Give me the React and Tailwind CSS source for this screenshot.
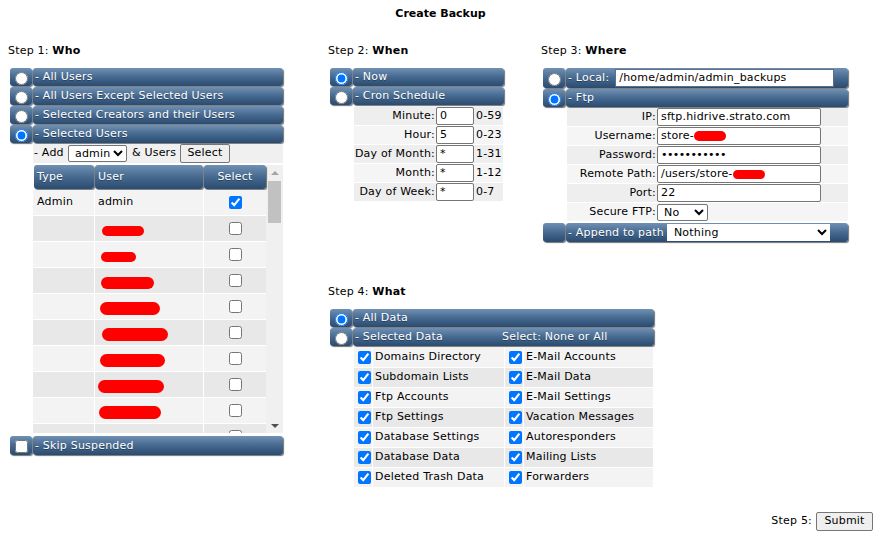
import React from "react";

const bar =
  "rounded-[3px] bg-linear-to-b from-[#7091b4] via-[#46698f] to-[#2b4b70] shadow-[1px_1px_1px_rgba(0,0,0,0.55)] text-white [text-shadow:0_1px_0_rgba(0,0,0,0.35)]";

const field = "h-[18px] border border-[#767676] rounded-[2px] bg-white px-[3px] leading-[16px] text-black";

const StepLabel = ({ n, t }) => (
  <div className="leading-[13px]">
    Step {n}: <span className="font-bold">{t}</span>
  </div>
);

const RadioCell = ({ checked, type = "radio" }) => (
  <div className={`${bar} w-[22px] h-full flex items-center justify-center shrink-0`}>
    {type && (
      <input type={type} readOnly checked={!!checked} className="m-0 mt-[2px] w-[13px] h-[13px]" />
    )}
  </div>
);

const Option = ({ checked, label, width, height = "h-[18px]", type, children }) => (
  <div className={`flex gap-[1px] ${height}`}>
    <RadioCell checked={checked} type={type} />
    <div className={`${bar} ${width} flex items-center pl-[2px] pt-[1px] whitespace-nowrap`}>
      {label}
      {children}
    </div>
  </div>
);

const Blob = ({ cls }) => <span className={`inline-block rounded-full bg-[#ff0000] ${cls}`} />;

const users = [
  { type: "Admin", name: "admin", checked: true },
  { blob: "w-[42px] h-[10px] ml-[4px]" },
  { blob: "w-[35px] h-[10px] ml-[3px]" },
  { blob: "w-[53px] h-[12px] ml-[3px]" },
  { blob: "w-[60px] h-[13px] ml-[2px]" },
  { blob: "w-[66px] h-[13px] ml-[4px]" },
  { blob: "w-[65px] h-[13px] ml-[2px]" },
  { blob: "w-[66px] h-[13px] ml-0" },
  { blob: "w-[62px] h-[13px] ml-[1px]" },
  {},
];

const cron = [
  ["Minute:", "0", "0-59"],
  ["Hour:", "5", "0-23"],
  ["Day of Month:", "*", "1-31"],
  ["Month:", "*", "1-12"],
  ["Day of Week:", "*", "0-7"],
];

const dataItems = [
  ["Domains Directory", "E-Mail Accounts"],
  ["Subdomain Lists", "E-Mail Data"],
  ["Ftp Accounts", "E-Mail Settings"],
  ["Ftp Settings", "Vacation Messages"],
  ["Database Settings", "Autoresponders"],
  ["Database Data", "Mailing Lists"],
  ["Deleted Trash Data", "Forwarders"],
];

function Who() {
  return (
    <div className="w-[328px] pl-[8px] shrink-0">
      <StepLabel n="1" t="Who" />
      <div className="ml-[2px] mt-[11px]">
        <div className="flex flex-col gap-[1px]">
          <Option label="- All Users" width="w-[250px]" />
          <Option label="- All Users Except Selected Users" width="w-[250px]" />
          <Option label="- Selected Creators and their Users" width="w-[250px]" />
          <Option checked label="- Selected Users" width="w-[250px]" />
          <div className="ml-[23px] w-[250px] h-[19px] bg-[#f0f0f0] flex items-center whitespace-nowrap">
            <span className="pl-[1px] w-[35px]">- Add</span>
            <select className="h-[17px] w-[59px] border border-[#767676] rounded-[2px] bg-white pl-[2px] text-black">
              <option>admin</option>
            </select>
            <span className="ml-[5px] w-[48px]">&amp; Users</span>
            <button className="h-[19px] w-[50px] border border-[#767676] rounded-[2px] bg-[#efefef]">Select</button>
          </div>
        </div>

        <div className="ml-[23px] mt-[2px] w-[250px] h-[268px] flex overflow-hidden bg-[#f0f0f0]">
          <div className="w-[233px] bg-white grid grid-cols-[61px_108px_62px] grid-rows-[24px] auto-rows-[25px] gap-[1px] content-start">
            <div className={`${bar} ml-[1px] flex items-center pl-[3px] pt-[1px]`}>Type</div>
            <div className={`${bar} flex items-center pl-[3px] pt-[1px]`}>User</div>
            <div className={`${bar} flex items-center justify-center pt-[1px]`}>Select</div>
            {users.map((u, i) => {
              const bg = i % 2 === 0 ? "bg-[#f3f3f3]" : "bg-[#e8e8e8]";
              return (
                <React.Fragment key={i}>
                  <div className={`${bg} flex items-center pl-[4px]`}>{u.type}</div>
                  <div className={`${bg} flex items-center pl-[3px]`}>
                    {u.name}
                    {u.blob && <Blob cls={`${u.blob} mt-[4px]`} />}
                  </div>
                  <div className={`${bg} flex items-center justify-center`}>
                    <input type="checkbox" readOnly checked={!!u.checked} className="m-0 w-[13px] h-[13px]" />
                  </div>
                </React.Fragment>
              );
            })}
          </div>
          <div className="w-[17px] flex flex-col items-center pt-[6px] pb-[5px]">
            <div className="w-0 h-0 border-x-[4px] border-x-transparent border-b-[4px] border-b-[#a3a3a3]" />
            <div className="mt-[6px] w-[13px] h-[42px] bg-[#c1c1c1]" />
            <div className="flex-1" />
            <div className="w-0 h-0 border-x-[4px] border-x-transparent border-t-[4px] border-t-[#505050]" />
          </div>
        </div>

        <div className="mt-[3px]">
          <Option type="checkbox" label="- Skip Suspended" width="w-[250px]" height="h-[19px]" />
        </div>
      </div>
    </div>
  );
}

function When() {
  return (
    <div className="w-[213px] shrink-0">
      <StepLabel n="2" t="When" />
      <div className="ml-[2px] mt-[11px] flex flex-col gap-[1px]">
        <Option checked label="- Now" width="w-[151px]" />
        <Option label="- Cron Schedule" width="w-[151px]" />
      </div>
      <div className="ml-[26px] mt-[2px] w-[149px] flex flex-col gap-[1px]">
        {cron.map(([label, val, range], i) => (
          <div
            key={label}
            className={`grid grid-cols-[82px_38px_29px] h-[18px] items-center ${i % 2 === 0 ? "bg-[#eeeeee]" : "bg-[#f5f5f5]"}`}
          >
            <span className="text-right pr-[1px] whitespace-nowrap">{label}</span>
            <div className={field}>{val}</div>
            <span className="pl-[2px]">{range}</span>
          </div>
        ))}
      </div>
    </div>
  );
}

function Where() {
  const rows = [
    ["IP:", <div key="ip" className={`${field} w-[164px]`}>sftp.hidrive.strato.com</div>],
    [
      "Username:",
      <div key="u" className={`${field} w-[164px] flex items-center`}>
        store-
        <Blob cls="w-[32px] h-[10px]" />
      </div>,
    ],
    [
      "Password:",
      <div key="p" className={`${field} w-[164px] tracking-[-0.6px]`}>•••••••••••</div>,
    ],
    [
      "Remote Path:",
      <div key="r" className={`${field} w-[164px] flex items-center`}>
        /users/store-
        <Blob cls="w-[32px] h-[9px]" />
      </div>,
    ],
    ["Port:", <div key="po" className={`${field} w-[164px]`}>22</div>],
    [
      "Secure FTP:",
      <select key="s" className="h-[17px] w-[51px] border border-[#767676] rounded-[2px] bg-white pl-[2px] text-black">
        <option>No</option>
      </select>,
    ],
  ];
  return (
    <div className="w-[320px] shrink-0">
      <StepLabel n="3" t="Where" />
      <div className="ml-[2px] mt-[11px] flex flex-col gap-[1px]">
        <Option label="- Local:" width="w-[282px]" height="h-[20px]">
          <div className="ml-[6px] -mt-[1px] w-[219px] h-[18px] bg-white border border-[#5b6f85] px-[3px] leading-[16px] text-black [text-shadow:none]">
            /home/admin/admin_backups
          </div>
        </Option>
        <Option checked label="- Ftp" width="w-[282px]" />
      </div>
      <div className="ml-[26px] mt-[1px] w-[281px] flex flex-col gap-[1px]">
        {rows.map(([label, ctl], i) => (
          <div
            key={label}
            className={`grid grid-cols-[90px_191px] h-[18px] items-center ${i % 2 === 0 ? "bg-[#eeeeee]" : "bg-[#f5f5f5]"}`}
          >
            <span className="text-right pr-[1px]">{label}</span>
            {ctl}
          </div>
        ))}
      </div>
      <div className="ml-[2px] mt-[2px]">
        <Option type={null} label="- Append to path" width="w-[282px]" height="h-[19px]">
          <select className="ml-[3px] -mt-[1px] h-[17px] w-[163px] bg-white text-black pl-[3px] [text-shadow:none]">
            <option>Nothing</option>
          </select>
        </Option>
      </div>
    </div>
  );
}

function What() {
  return (
    <div className="mt-[43px]">
      <StepLabel n="4" t="What" />
      <div className="ml-[2px] mt-[11px] flex flex-col gap-[1px]">
        <Option checked label="- All Data" width="w-[301px]" />
        <Option label="" width="w-[301px]">
          <span className="w-[147px]">- Selected Data</span>
          <span>Select: None or All</span>
        </Option>
      </div>
      <div className="ml-[26px] mt-[2px] w-[299px] grid grid-cols-[150px_148px] auto-rows-[19px] gap-[1px]">
        {dataItems.map((pair, i) =>
          pair.map((label) => {
            const bg = i % 2 === 0 ? "bg-[#f3f3f3]" : "bg-[#e8e8e8]";
            return (
              <div key={label} className="flex gap-[1px]">
                <div className={`${bg} w-[18px] flex items-center pl-[4px]`}>
                  <input type="checkbox" readOnly checked className="m-0 w-[13px] h-[13px]" />
                </div>
                <div className={`${bg} flex-1 flex items-center pl-[2px] whitespace-nowrap`}>{label}</div>
              </div>
            );
          })
        )}
      </div>
    </div>
  );
}

export default function App() {
  return (
    <div className="w-[889px] h-[540px] bg-white text-[11px] tracking-[0.2px] text-black font-['DejaVu_Sans',Verdana,sans-serif] overflow-hidden">
      <div className="w-[881px] pt-[7px] leading-[13px] text-center font-bold tracking-normal">Create Backup</div>
      <div className="mt-[24px] h-[468px] flex">
        <Who />
        <div className="flex flex-col">
          <div className="flex">
            <When />
            <Where />
          </div>
          <What />
        </div>
      </div>
      <div className="flex justify-end items-center gap-[4px] pr-[16px]">
        <span>Step 5:</span>
        <button className="h-[19px] w-[57px] border border-[#767676] rounded-[2px] bg-[#efefef]">Submit</button>
      </div>
    </div>
  );
}
